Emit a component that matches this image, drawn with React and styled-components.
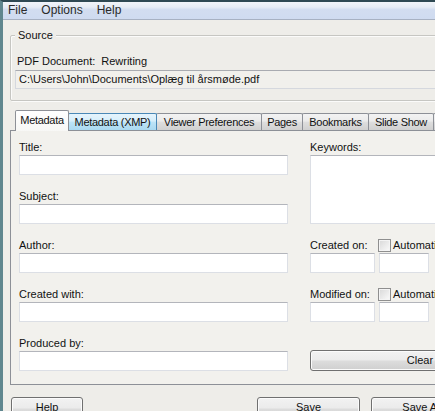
import React from 'react';
import styled, { createGlobalStyle } from 'styled-components';

const Global = createGlobalStyle`
  html, body { margin: 0; padding: 0; background: #eeede9; }
  body { font-family: "Liberation Sans", Arial, sans-serif; }
  * { box-sizing: border-box; }
`;

const Window = styled.div`
  width: 435px;
  height: 411px;
  overflow: hidden;
  border-top: 2px solid #2f4953;
  border-left: 3px solid #5f868e;
  background: #eeede9;
  font: 11px/12px "Liberation Sans", Arial, sans-serif;
  color: #111;
`;

const Inner = styled.div`
  width: 580px;
`;

const MenuBar = styled.div`
  display: flex;
  gap: 14px;
  height: 18px;
  padding-left: 5px;
  background: linear-gradient(#f1f4f9 0%, #e6ecf5 30%, #d2ddf0 45%, #cfdbf0 100%);
  border-bottom: 1px solid #a7b1c2;
  font-size: 12px;
  line-height: 17px;
  color: #2a2a2a;
`;

const MenuItem = styled.span``;

const Body = styled.div`
  padding-left: 7px;
`;

const GroupBox = styled.div`
  margin-top: 15px;
  border: 1px solid #c6c6c2;
  border-radius: 2px;
  box-shadow: inset 1px 1px 0 #fbfbfa, 1px 1px 0 #fbfbfa;
  padding: 0 0 11px 4px;
`;

const Legend = styled.div`
  margin-top: -7px;
  padding: 0 3px;
  width: fit-content;
  line-height: 13px;
  background: #eeede9;
`;

const DocRow = styled.div`
  margin-top: 13px;
  padding-left: 2px;
  display: flex;
  line-height: 13px;
  height: 13px;
`;

const DocValue = styled.span`
  margin-left: 6px;
`;

const PathBox = styled.div`
  margin-top: 2px;
  height: 19px;
  border: 1px solid #d5d8de;
  border-top-color: #a9abb1;
  background: #f1f0ec;
  padding-left: 3px;
  line-height: 17px;
  white-space: nowrap;
`;

const TabStrip = styled.div`
  margin-top: 9px;
  height: 20px;
  padding-left: 5px;
  display: flex;
  align-items: flex-end;
`;

const tabBg = {
  active: 'linear-gradient(#ffffff, #f7f7f5)',
  hover: 'linear-gradient(#e6f4fc 0%, #d5eefb 45%, #bee4f7 50%, #aad9f1 100%)',
  normal: 'linear-gradient(#f3f3f3 0%, #ebebeb 45%, #dedede 50%, #d0d0d0 100%)',
};

const Tab = styled.div`
  position: relative;
  width: ${(p) => p.$w}px;
  height: ${(p) => (p.$state === 'active' ? 21 : 17)}px;
  margin-bottom: ${(p) => (p.$state === 'active' ? -1 : 0)}px;
  margin-left: ${(p) => (p.$first ? 0 : -1)}px;
  z-index: ${(p) => (p.$state === 'active' ? 2 : p.$state === 'hover' ? 1 : 0)};
  border: 1px solid ${(p) => (p.$state === 'hover' ? '#4a88b6' : '#8d9097')};
  border-bottom: none;
  border-radius: 2px 2px 0 0;
  background: ${(p) => tabBg[p.$state]};
  text-align: center;
  line-height: ${(p) => (p.$state === 'active' ? 19 : 16)}px;
  letter-spacing: -0.3px;
  white-space: nowrap;
  overflow: hidden;
`;

const Panel = styled.div`
  border: 1px solid #8d9097;
  background: #f2f1ed;
  padding: 10px 0 13px 8px;
  display: flex;
  gap: 22px;
`;

const Column = styled.div`
  width: ${(p) => p.$w}px;
  display: flex;
  flex-direction: column;
  gap: 15px;
`;

const Field = styled.div`
  display: flex;
  flex-direction: column;
  gap: 2px;
`;

const Label = styled.div`
  height: 12px;
  line-height: 12px;
  white-space: nowrap;
`;

const Input = styled.div`
  width: ${(p) => (p.$w ? `${p.$w}px` : '100%')};
  height: ${(p) => p.$h || 20}px;
  background: #fff;
  border: 1px solid #dcdfe5;
  border-top-color: #b3b5bb;
`;

const LabelRow = styled.div`
  display: flex;
  align-items: center;
  height: 12px;
  white-space: nowrap;
`;

const RowLabel = styled.span`
  width: 68px;
`;

const CheckBox = styled.span`
  width: 13px;
  height: 13px;
  margin-right: 2px;
  border: 1px solid #8f8f8f;
  background: linear-gradient(135deg, #d8d8d8, #fbfbfb);
  box-shadow: inset 0 0 0 1px #f4f4f4;
`;

const InputRow = styled.div`
  display: flex;
  gap: 4px;
`;

const Button = styled.div`
  width: ${(p) => (p.$w ? `${p.$w}px` : '100%')};
  height: ${(p) => p.$h || 23}px;
  margin-left: ${(p) => p.$ml || 0}px;
  margin-top: ${(p) => p.$mt || 0}px;
  border: 1px solid #707070;
  border-radius: 3px;
  background: linear-gradient(#f2f2f2 0%, #ebebeb 48%, #dddddd 52%, #cfcfcf 100%);
  box-shadow: inset 0 0 0 1px #fbfbfb;
  text-align: center;
  line-height: ${(p) => (p.$h ? p.$h - 3 : 19)}px;
  color: #111;
`;

const ButtonRow = styled.div`
  margin-top: 12px;
  padding-left: 1px;
  display: flex;
`;

const tabs = [
  { label: 'Metadata', w: 54, state: 'active' },
  { label: 'Metadata (XMP)', w: 89, state: 'hover' },
  { label: 'Viewer Preferences', w: 106, state: 'normal' },
  { label: 'Pages', w: 42, state: 'normal' },
  { label: 'Bookmarks', w: 67, state: 'normal' },
  { label: 'Slide Show', w: 66, state: 'normal' },
  { label: '', w: 60, state: 'normal' },
];

const leftFields = ['Title:', 'Subject:', 'Author:', 'Created with:', 'Produced by:'];

function DateField({ label }) {
  return (
    <Field>
      <LabelRow>
        <RowLabel>{label}</RowLabel>
        <CheckBox />
        <span>Automatic</span>
      </LabelRow>
      <InputRow>
        <Input $w={65} />
        <Input $w={50} />
      </InputRow>
    </Field>
  );
}

export default function App() {
  return (
    <>
      <Global />
      <Window>
        <Inner>
          <MenuBar>
            <MenuItem>File</MenuItem>
            <MenuItem>Options</MenuItem>
            <MenuItem>Help</MenuItem>
          </MenuBar>
          <Body>
            <GroupBox>
              <Legend>Source</Legend>
              <DocRow>
                <span>PDF Document:</span>
                <DocValue>Rewriting</DocValue>
              </DocRow>
              <PathBox>C:\Users\John\Documents\Oplæg til årsmøde.pdf</PathBox>
            </GroupBox>
            <TabStrip>
              {tabs.map((t, i) => (
                <Tab key={i} $w={t.w} $state={t.state} $first={i === 0}>
                  {t.label}
                </Tab>
              ))}
            </TabStrip>
            <Panel>
              <Column $w={269}>
                {leftFields.map((f) => (
                  <Field key={f}>
                    <Label>{f}</Label>
                    <Input />
                  </Field>
                ))}
              </Column>
              <Column $w={220}>
                <Field>
                  <Label>Keywords:</Label>
                  <Input $h={69} />
                </Field>
                <DateField label="Created on:" />
                <DateField label="Modified on:" />
                <Button $h={21} $mt={13}>Clear</Button>
              </Column>
            </Panel>
            <ButtonRow>
              <Button $w={72}>Help</Button>
              <Button $w={103} $ml={174}>Save</Button>
              <Button $w={103} $ml={11}>Save As</Button>
            </ButtonRow>
          </Body>
        </Inner>
      </Window>
    </>
  );
}
